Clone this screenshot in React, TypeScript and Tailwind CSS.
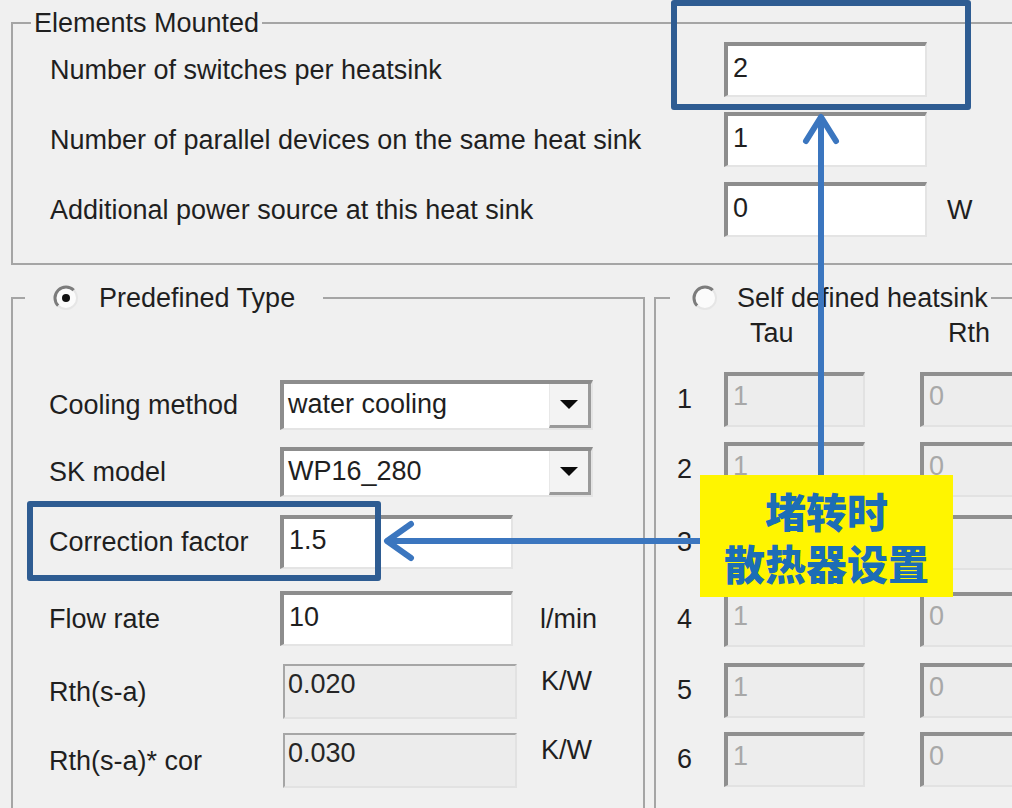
import type { ReactNode } from 'react';

const ink = 'text-[#1f1f1f]';

function Radio({ checked }: { checked?: boolean }) {
  return (
    <svg width="26" height="26" viewBox="0 0 26 26" className="shrink-0">
      <circle cx="13" cy="13" r="11" fill="#fbfbfb" />
      <path d="M5.2 20.8 A11 11 0 0 1 20.8 5.2" fill="none" stroke="#7c7c7c" strokeWidth="3" />
      <path d="M20.8 5.2 A11 11 0 0 1 5.2 20.8" fill="none" stroke="#e6e6e6" strokeWidth="2" />
      {checked ? <circle cx="13" cy="13" r="4" fill="#111" /> : null}
    </svg>
  );
}

function Field({
  value,
  className,
}: {
  value: string;
  className: string;
}) {
  return (
    <div
      className={`flex items-center bg-white pb-[6px] pl-[5px] border-t-[4px] border-l-[4px] border-r-2 border-b-2 border-t-[#8d8d8d] border-l-[#8d8d8d] border-r-[#e4e4e4] border-b-[#e4e4e4] text-[27px] leading-[30px] ${ink} ${className}`}
    >
      {value}
    </div>
  );
}

function GrayField({ value, className }: { value: string; className: string }) {
  return (
    <div
      className={`bg-[#ededed] pt-[5px] pl-[5px] border-t-[4px] border-l-[4px] border-r-2 border-b-2 border-t-[#8f8f8f] border-l-[#8f8f8f] border-r-[#e2e2e2] border-b-[#e2e2e2] text-[27px] leading-[30px] text-[#a8a8a8] ${className}`}
    >
      {value}
    </div>
  );
}

function ReadOnly({ value }: { value: string }) {
  return (
    <div className="ml-[3px] h-full w-[234px] bg-[#ececec] pt-[3px] pl-[3px] border-t-2 border-l-2 border-r-2 border-b-2 border-t-[#a6a6a6] border-l-[#a6a6a6] border-r-[#e2e2e2] border-b-[#e2e2e2] text-[27px] leading-[30px] text-[#262626]">
      {value}
    </div>
  );
}

function Combo({ value }: { value: string }) {
  return (
    <div className="flex h-full w-[313px] bg-white border-t-[4px] border-l-[4px] border-r-2 border-b-2 border-t-[#8d8d8d] border-l-[#8d8d8d] border-r-[#e4e4e4] border-b-[#e4e4e4]">
      <div className={`flex flex-1 items-center pb-[4px] pl-[4px] text-[27px] leading-[30px] ${ink}`}>
        {value}
      </div>
      <div className="flex w-[42px] items-center justify-center bg-[#f3f3f3] border-r-[3px] border-b-[3px] border-r-[#9a9a9a] border-b-[#9a9a9a] border-l border-l-[#e8e8e8]">
        <svg width="18" height="10" viewBox="0 0 18 10">
          <polygon points="0,0 18,0 9,9" fill="#0a0a0a" />
        </svg>
      </div>
    </div>
  );
}

function Row({
  label,
  className,
  children,
}: {
  label: string;
  className: string;
  children: ReactNode;
}) {
  return (
    <div className={`flex items-center ${className}`}>
      <span className={`w-[231px] shrink-0 text-[27px] leading-[30px] ${ink}`}>{label}</span>
      {children}
    </div>
  );
}

function Legend({ children, className }: { children: ReactNode; className: string }) {
  return (
    <legend className={`flex h-[30px] items-center text-[27px] leading-[30px] ${ink} ${className}`}>
      {children}
    </legend>
  );
}

export default function App() {
  const selfRows = [
    { n: '1', cls: 'mt-[24px]' },
    { n: '2', cls: 'mt-[15px]' },
    { n: '3', cls: 'mt-[18px]' },
    { n: '4', cls: 'mt-[22px]' },
    { n: '5', cls: 'mt-[16px]' },
    { n: '6', cls: 'mt-[14px]' },
  ];

  return (
    <div className="relative h-[808px] w-[1012px] overflow-hidden bg-[#f0f0f0] font-['Liberation_Sans',Arial,sans-serif]">
      <fieldset className="ml-[11px] mt-[8px] w-[1040px] border-2 border-[#a5a5a5] p-0">
        <Legend className="ml-[18px] px-[3px]">Elements Mounted</Legend>
        <div className="flex flex-col gap-[15px] pb-[26px] pl-[37px] pt-[4px]">
          {[
            ['Number of switches per heatsink', '2', ''],
            ['Number of parallel devices on the same heat sink', '1', ''],
            ['Additional power source at this heat sink', '0', 'W'],
          ].map(([label, value, unit]) => (
            <div key={label} className="flex h-[55px] items-center">
              <span className={`w-[674px] shrink-0 text-[27px] leading-[30px] ${ink}`}>{label}</span>
              <Field value={value} className="h-full w-[203px]" />
              <span className={`pl-[20px] text-[27px] leading-[30px] ${ink}`}>{unit}</span>
            </div>
          ))}
        </div>
      </fieldset>

      <div className="mt-[18px] flex gap-[9px] pl-[11px]">
        <fieldset className="h-[560px] w-[634px] shrink-0 border-2 border-[#a5a5a5] p-0">
          <Legend className="ml-[12px] gap-[20px] pl-[28px] pr-[28px]">
            <Radio checked />
            <span>Predefined Type</span>
          </Legend>
          <div className="flex flex-col pl-[36px]">
            <Row label="Cooling method" className="mt-[67px] h-[50px]">
              <Combo value="water cooling" />
            </Row>
            <Row label="SK model" className="mt-[17px] h-[50px]">
              <Combo value="WP16_280" />
            </Row>
            <Row label="Correction factor" className="mt-[18px] h-[54px]">
              <Field value="1.5" className="h-full w-[233px]" />
            </Row>
            <Row label="Flow rate" className="mt-[22px] h-[55px]">
              <Field value="10" className="h-full w-[233px]" />
              <span className={`pl-[27px] text-[27px] leading-[30px] ${ink}`}>l/min</span>
            </Row>
            <Row label="Rth(s-a)" className="mt-[18px] h-[55px]">
              <ReadOnly value="0.020" />
              <span className={`self-start pl-[24px] pt-[2px] text-[27px] leading-[30px] ${ink}`}>K/W</span>
            </Row>
            <Row label="Rth(s-a)* cor" className="mt-[14px] h-[55px]">
              <ReadOnly value="0.030" />
              <span className={`self-start pl-[24px] pt-[2px] text-[27px] leading-[30px] ${ink}`}>K/W</span>
            </Row>
          </div>
        </fieldset>

        <fieldset className="h-[560px] w-[420px] shrink-0 border-2 border-[#a5a5a5] p-0">
          <Legend className="ml-[14px] gap-[19px] pl-[22px] pr-[3px]">
            <Radio />
            <span>Self defined heatsink</span>
          </Legend>
          <div className="flex flex-col pl-[18px]">
            <div className={`mt-[5px] grid h-[30px] grid-cols-[50px_141px_125px] text-[27px] leading-[30px] ${ink}`}>
              <span />
              <span className="pl-[26px]">Tau</span>
              <span className="text-right">Rth</span>
            </div>
            {selfRows.map((r) => (
              <div key={r.n} className={`grid h-[55px] grid-cols-[50px_141px_55px_140px] items-center ${r.cls}`}>
                <span className={`pl-[3px] pb-[2px] text-[27px] leading-[30px] ${ink}`}>{r.n}</span>
                <GrayField value="1" className="h-full" />
                <span />
                <GrayField value="0" className="h-full" />
              </div>
            ))}
          </div>
        </fieldset>
      </div>

      {/* annotation overlay */}
      <div className="pointer-events-none absolute left-[671px] top-0 h-[110px] w-[300px] rounded-[3px] border-[6px] border-[#2e5c92]" />
      <div className="pointer-events-none absolute left-[27px] top-[501px] h-[80px] w-[354px] rounded-[3px] border-[6px] border-[#2e5c92]" />
      <svg className="pointer-events-none absolute inset-0" width="1012" height="808" viewBox="0 0 1012 808">
        <g fill="none" stroke="#3b76bf" strokeWidth="6" strokeLinecap="round" strokeLinejoin="round">
          <line x1="821" y1="478" x2="821" y2="118" />
          <polyline points="806,141 821,117 836,141" />
          <line x1="702" y1="541" x2="388" y2="541" />
          <polyline points="411,524 387,541 411,558" />
        </g>
      </svg>
      <div className="absolute left-[700px] top-[475px] flex h-[122px] w-[253px] flex-col items-center justify-center bg-[#fff500] font-['Noto_Sans_CJK_SC',sans-serif] text-[41px] font-black leading-[52px] text-[#1c6db6]">
        <span>堵转时</span>
        <span>散热器设置</span>
      </div>
    </div>
  );
}
